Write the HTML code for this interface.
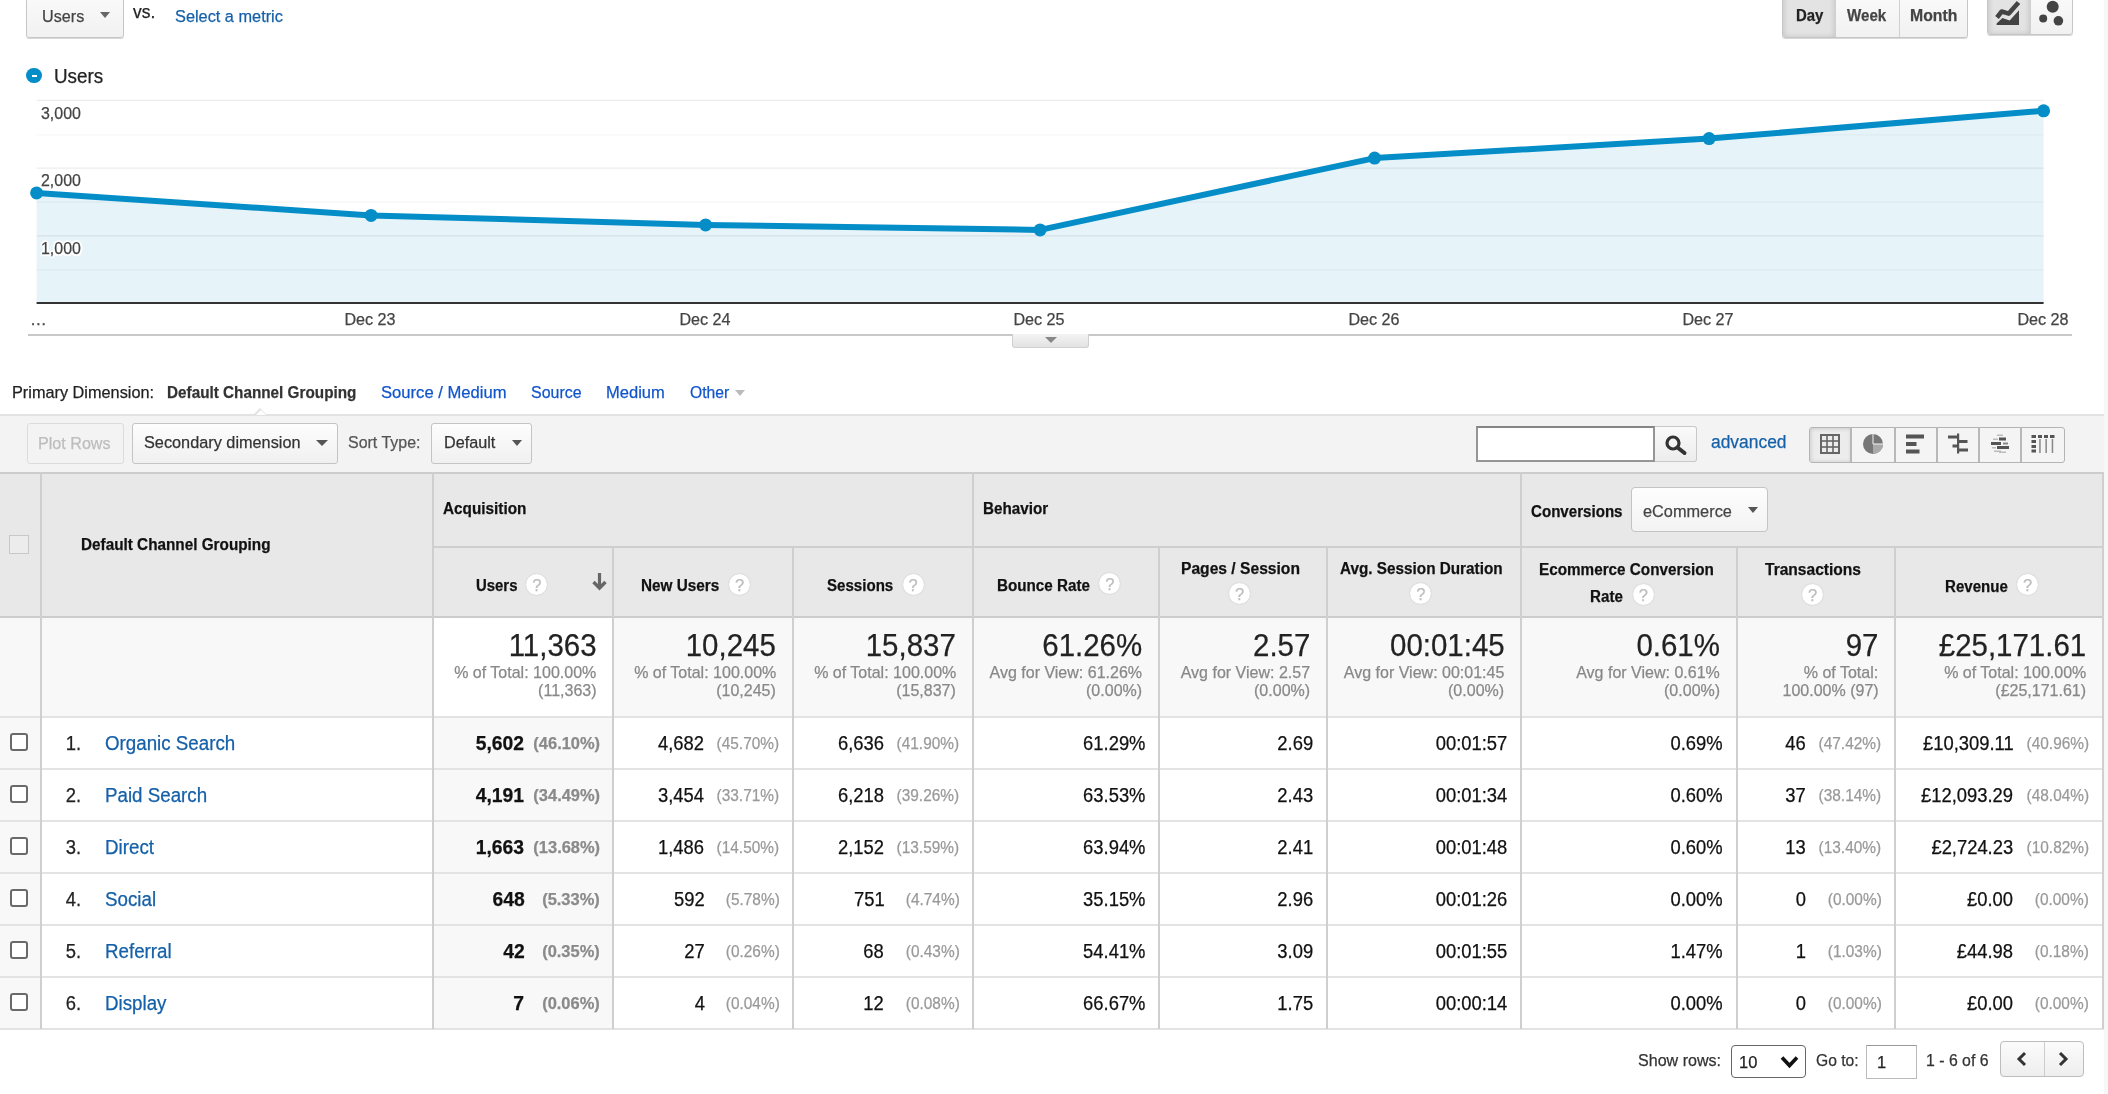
<!DOCTYPE html>
<html><head><meta charset="utf-8"><title>Channels</title><style>html,body{margin:0;padding:0;background:#fff;overflow:hidden;}#root{position:relative;width:2108px;height:1094px;overflow:hidden;background:#fff;font-family:"Liberation Sans", sans-serif;}#root div{box-sizing:content-box;}#root{will-change:transform;}#root div{-webkit-text-stroke:0.25px currentColor;}</style></head><body><div id="root">
<div style="position:absolute;left:26px;top:-10px;width:96px;height:46px;border:1.5px solid #c6c6c6;border-radius:3px;background:linear-gradient(#fbfbfb,#f1f1f1);box-shadow:0 1px 0 #d8d8d8"></div>
<div style="position:absolute;top:7.84px;font-size:17.4px;line-height:17.4px;color:#444;white-space:nowrap;left:42.4px;transform-origin:0 0;transform:scaleX(0.93);">Users</div>
<div style="position:absolute;left:100px;top:12px;width:0;height:0;border-left:5px solid transparent;border-right:5px solid transparent;border-top:6px solid #666"></div>
<div style="position:absolute;top:3.04px;font-size:18.7px;line-height:18.7px;color:#222;white-space:nowrap;left:133px;transform-origin:0 0;transform:scaleX(0.93);">vs.</div>
<div style="position:absolute;top:8.14px;font-size:17.4px;line-height:17.4px;color:#1560a8;white-space:nowrap;left:175px;transform-origin:0 0;transform:scaleX(0.938);">Select a metric</div>
<div style="position:absolute;left:1782px;top:-10px;width:184px;height:46px;border:1.5px solid #c6c6c6;border-radius:3px;background:linear-gradient(#fbfbfb,#f1f1f1);box-shadow:0 1px 0 #d8d8d8;overflow:hidden"><div style="position:absolute;left:0;top:0;width:52px;height:47px;background:#e3e3e3;box-shadow:inset 0 0 6px rgba(0,0,0,.18)"></div><div style="position:absolute;left:52px;top:0;width:1px;height:47px;background:#d0d0d0"></div><div style="position:absolute;left:116px;top:0;width:1px;height:47px;background:#d0d0d0"></div></div>
<div style="position:absolute;top:8.35px;font-size:16.8px;line-height:16.8px;color:#222;white-space:nowrap;font-weight:700;left:1795.5px;transform-origin:0 0;transform:scaleX(0.89);">Day</div>
<div style="position:absolute;top:8.35px;font-size:16.8px;line-height:16.8px;color:#444;white-space:nowrap;font-weight:700;left:1846.7px;transform-origin:0 0;transform:scaleX(0.9);">Week</div>
<div style="position:absolute;top:8.35px;font-size:16.8px;line-height:16.8px;color:#444;white-space:nowrap;font-weight:700;left:1910.4px;transform-origin:0 0;transform:scaleX(0.94);">Month</div>
<div style="position:absolute;left:1987px;top:-10px;width:84px;height:43px;border:1.5px solid #c6c6c6;border-radius:3px;background:linear-gradient(#fbfbfb,#f1f1f1);box-shadow:0 1px 0 #d8d8d8;overflow:hidden"><div style="position:absolute;left:0;top:0;width:42px;height:44px;background:#e3e3e3;box-shadow:inset 0 0 6px rgba(0,0,0,.18)"></div><div style="position:absolute;left:42px;top:0;width:1px;height:44px;background:#d0d0d0"></div></div>
<svg style="position:absolute;left:1995px;top:0px" width="40" height="35" viewBox="0 0 40 35"><path d="M1.6 25 L1.6 23.5 L7.4 17.9 L14.7 20.5 L24 10.2 L24 25 Z" fill="#444"/><path d="M2 17.5 L6.7 11.5 L13.8 13.6 L23.5 2.5" stroke="#444" stroke-width="4.6" stroke-linejoin="round" fill="none"/></svg>
<svg style="position:absolute;left:2034px;top:0px" width="32" height="30" viewBox="0 0 32 30"><circle cx="18.7" cy="6.8" r="6" fill="#444"/><circle cx="9.2" cy="18.5" r="4" fill="#444"/><circle cx="24.4" cy="20.8" r="4.8" fill="#444"/></svg>
<div style="position:absolute;left:26px;top:68px;width:16px;height:15px;border-radius:8px;background:#058dc7"></div>
<div style="position:absolute;left:31.5px;top:74.5px;width:5px;height:2.5px;background:#fff"></div>
<div style="position:absolute;top:65.69px;font-size:20.3px;line-height:20.3px;color:#222;white-space:nowrap;left:53.8px;transform-origin:0 0;transform:scaleX(0.93);">Users</div>
<svg style="position:absolute;left:0;top:0" width="2108" height="350" viewBox="0 0 2108 350"><polygon points="36.6,303 36.6,192.9 371.1,215.4 705.6,224.9 1040.1,229.9 1374.6,158.1 1709.1,138.6 2043.6,110.8 2043.6,303" fill="#058dc7" fill-opacity="0.1"/><line x1="36.6" x2="2043.6" y1="100.3" y2="100.3" stroke="#000" stroke-opacity="0.075" stroke-width="1.3"/><line x1="36.6" x2="2043.6" y1="134.8" y2="134.8" stroke="#000" stroke-opacity="0.035" stroke-width="1.3"/><line x1="36.6" x2="2043.6" y1="168.2" y2="168.2" stroke="#000" stroke-opacity="0.075" stroke-width="1.3"/><line x1="36.6" x2="2043.6" y1="202" y2="202" stroke="#000" stroke-opacity="0.035" stroke-width="1.3"/><line x1="36.6" x2="2043.6" y1="235.9" y2="235.9" stroke="#000" stroke-opacity="0.075" stroke-width="1.3"/><line x1="36.6" x2="2043.6" y1="270" y2="270" stroke="#000" stroke-opacity="0.035" stroke-width="1.3"/><line x1="36.6" x2="2043.6" y1="303" y2="303" stroke="#333" stroke-width="2"/><polyline points="36.6,192.9 371.1,215.4 705.6,224.9 1040.1,229.9 1374.6,158.1 1709.1,138.6 2043.6,110.8" fill="none" stroke="#058dc7" stroke-width="6" stroke-linejoin="round"/><circle cx="36.6" cy="192.9" r="6.5" fill="#058dc7"/><circle cx="371.1" cy="215.4" r="6.5" fill="#058dc7"/><circle cx="705.6" cy="224.9" r="6.5" fill="#058dc7"/><circle cx="1040.1" cy="229.9" r="6.5" fill="#058dc7"/><circle cx="1374.6" cy="158.1" r="6.5" fill="#058dc7"/><circle cx="1709.1" cy="138.6" r="6.5" fill="#058dc7"/><circle cx="2043.6" cy="110.8" r="6.5" fill="#058dc7"/></svg>
<div style="position:absolute;top:105.65px;font-size:16.8px;line-height:16.8px;color:#444;white-space:nowrap;left:41px;transform-origin:0 0;transform:scaleX(0.95);text-shadow:2px 0 1px #fff,-2px 0 1px #fff,0 2px 1px #fff,0 -2px 1px #fff,1.5px 1.5px 1px #fff,-1.5px -1.5px 1px #fff,1.5px -1.5px 1px #fff,-1.5px 1.5px 1px #fff,0 0 2px #fff;">3,000</div>
<div style="position:absolute;top:173.35px;font-size:16.8px;line-height:16.8px;color:#444;white-space:nowrap;left:41px;transform-origin:0 0;transform:scaleX(0.95);text-shadow:2px 0 1px #fff,-2px 0 1px #fff,0 2px 1px #fff,0 -2px 1px #fff,1.5px 1.5px 1px #fff,-1.5px -1.5px 1px #fff,1.5px -1.5px 1px #fff,-1.5px 1.5px 1px #fff,0 0 2px #fff;">2,000</div>
<div style="position:absolute;top:240.85px;font-size:16.8px;line-height:16.8px;color:#444;white-space:nowrap;left:41px;transform-origin:0 0;transform:scaleX(0.95);text-shadow:2px 0 1px #fff,-2px 0 1px #fff,0 2px 1px #fff,0 -2px 1px #fff,1.5px 1.5px 1px #fff,-1.5px -1.5px 1px #fff,1.5px -1.5px 1px #fff,-1.5px 1.5px 1px #fff,0 0 2px #fff;">1,000</div>
<div style="position:absolute;top:311.65px;font-size:16.8px;line-height:16.8px;color:#444;white-space:nowrap;left:30px;transform-origin:0 0;transform:scaleX(1);">&hellip;</div>
<div style="position:absolute;top:311.65px;font-size:16.8px;line-height:16.8px;color:#444;white-space:nowrap;left:371.1px;transform-origin:0 0;transform:translateX(-50%) scaleX(0.962);">Dec 23</div>
<div style="position:absolute;top:311.65px;font-size:16.8px;line-height:16.8px;color:#444;white-space:nowrap;left:705.6px;transform-origin:0 0;transform:translateX(-50%) scaleX(0.962);">Dec 24</div>
<div style="position:absolute;top:311.65px;font-size:16.8px;line-height:16.8px;color:#444;white-space:nowrap;left:1040.1px;transform-origin:0 0;transform:translateX(-50%) scaleX(0.962);">Dec 25</div>
<div style="position:absolute;top:311.65px;font-size:16.8px;line-height:16.8px;color:#444;white-space:nowrap;left:1374.6px;transform-origin:0 0;transform:translateX(-50%) scaleX(0.962);">Dec 26</div>
<div style="position:absolute;top:311.65px;font-size:16.8px;line-height:16.8px;color:#444;white-space:nowrap;left:1709.1px;transform-origin:0 0;transform:translateX(-50%) scaleX(0.962);">Dec 27</div>
<div style="position:absolute;top:311.65px;font-size:16.8px;line-height:16.8px;color:#444;white-space:nowrap;left:2043.6px;transform-origin:0 0;transform:translateX(-50%) scaleX(0.962);">Dec 28</div>
<div style="position:absolute;left:28px;top:334px;width:2044px;height:2px;background:#c8c8c8"></div>
<div style="position:absolute;left:1012px;top:334px;width:75px;height:13px;border:1px solid #d0d0d0;border-top:none;border-radius:0 0 3px 3px;background:linear-gradient(#f4f4f4,#e2e2e2)"></div>
<div style="position:absolute;left:1044.5px;top:337px;width:0;height:0;border-left:6px solid transparent;border-right:6px solid transparent;border-top:6px solid #888"></div>
<div style="position:absolute;top:384.14px;font-size:17.4px;line-height:17.4px;color:#222;white-space:nowrap;left:11.6px;transform-origin:0 0;transform:scaleX(0.9361);">Primary Dimension:</div>
<div style="position:absolute;top:384.14px;font-size:17.4px;line-height:17.4px;color:#333;white-space:nowrap;font-weight:700;left:166.5px;transform-origin:0 0;transform:scaleX(0.8791);">Default Channel Grouping</div>
<div style="position:absolute;top:384.14px;font-size:17.4px;line-height:17.4px;color:#1155cc;white-space:nowrap;left:380.8px;transform-origin:0 0;transform:scaleX(0.9551);">Source / Medium</div>
<div style="position:absolute;top:384.14px;font-size:17.4px;line-height:17.4px;color:#1155cc;white-space:nowrap;left:530.9px;transform-origin:0 0;transform:scaleX(0.9175);">Source</div>
<div style="position:absolute;top:384.14px;font-size:17.4px;line-height:17.4px;color:#1155cc;white-space:nowrap;left:606.4px;transform-origin:0 0;transform:scaleX(0.9499);">Medium</div>
<div style="position:absolute;top:384.14px;font-size:17.4px;line-height:17.4px;color:#1155cc;white-space:nowrap;left:690.3px;transform-origin:0 0;transform:scaleX(0.9011);">Other</div>
<div style="position:absolute;left:734.5px;top:390px;width:0;height:0;border-left:5.75px solid transparent;border-right:5.75px solid transparent;border-top:6px solid #bbb"></div>
<div style="position:absolute;left:0px;top:414px;width:2104px;height:58px;background:#f3f3f3"></div>
<div style="position:absolute;left:0px;top:414px;width:2104px;height:1.5px;background:#e2e2e2"></div>
<div style="position:absolute;left:254px;top:408px;width:0;height:0;border-left:6.5px solid transparent;border-right:6.5px solid transparent;border-bottom:6.5px solid #e2e2e2"></div>
<div style="position:absolute;left:255.5px;top:409.5px;width:0;height:0;border-left:5px solid transparent;border-right:5px solid transparent;border-bottom:5px solid #fff"></div>
<div style="position:absolute;left:26.5px;top:422.5px;width:95px;height:39px;border:1px solid #dcdcdc;border-radius:3px;background:#f3f3f3"></div>
<div style="position:absolute;top:435.34px;font-size:17.4px;line-height:17.4px;color:#bdbdbd;white-space:nowrap;left:38.4px;transform-origin:0 0;transform:scaleX(0.9266);">Plot Rows</div>
<div style="position:absolute;left:132.3px;top:422.6px;width:204px;height:39.4px;border:1.5px solid #c4c4c4;border-radius:3px;background:linear-gradient(#fdfdfd,#f0f0f0);"></div>
<div style="position:absolute;top:434.44px;font-size:17.4px;line-height:17.4px;color:#333;white-space:nowrap;left:144.3px;transform-origin:0 0;transform:scaleX(0.9358);">Secondary dimension</div>
<div style="position:absolute;left:316px;top:440px;width:0;height:0;border-left:6.0px solid transparent;border-right:6.0px solid transparent;border-top:6px solid #555"></div>
<div style="position:absolute;top:433.94px;font-size:17.4px;line-height:17.4px;color:#555;white-space:nowrap;left:347.6px;transform-origin:0 0;transform:scaleX(0.9177);">Sort Type:</div>
<div style="position:absolute;left:430.7px;top:422.8px;width:99.6px;height:38.8px;border:1.5px solid #c4c4c4;border-radius:3px;background:linear-gradient(#fdfdfd,#f0f0f0);"></div>
<div style="position:absolute;top:433.94px;font-size:17.4px;line-height:17.4px;color:#333;white-space:nowrap;left:444px;transform-origin:0 0;transform:scaleX(0.932);">Default</div>
<div style="position:absolute;left:511.7px;top:440px;width:0;height:0;border-left:5.3px solid transparent;border-right:5.3px solid transparent;border-top:6px solid #555"></div>
<div style="position:absolute;left:1476px;top:426px;width:175px;height:31.5px;border:2px solid #959595;border-top-color:#858585;background:#fff"></div>
<div style="position:absolute;left:1655px;top:426px;width:40.5px;height:33.5px;border:1px solid #c8c8c8;border-left:none;border-radius:0 3px 3px 0;background:linear-gradient(#fafafa,#ececec)"></div>
<svg style="position:absolute;left:1664px;top:434px" width="26" height="24" viewBox="0 0 26 24"><circle cx="9" cy="9" r="6" stroke="#333" stroke-width="3.2" fill="none"/><line x1="13.5" y1="13.5" x2="20.5" y2="19" stroke="#333" stroke-width="4" stroke-linecap="round"/></svg>
<div style="position:absolute;top:432.74px;font-size:18px;line-height:18px;color:#1560a8;white-space:nowrap;left:1710.7px;transform-origin:0 0;transform:scaleX(0.9673);">advanced</div>
<div style="position:absolute;left:1808.5px;top:426.5px;width:254.5px;height:34.5px;border:1.5px solid #b4b4b4;border-radius:3px;background:#f4f4f4;overflow:hidden"><div style="position:absolute;left:0;top:0;width:42px;height:35px;background:#ececec;box-shadow:inset 0 0 5px rgba(0,0,0,.2)"></div></div>
<div style="position:absolute;left:1850.35px;top:427px;width:1.5px;height:35px;background:#b8b8b8"></div>
<div style="position:absolute;left:1894.25px;top:427px;width:1.5px;height:35px;background:#b8b8b8"></div>
<div style="position:absolute;left:1936.15px;top:427px;width:1.5px;height:35px;background:#b8b8b8"></div>
<div style="position:absolute;left:1978.25px;top:427px;width:1.5px;height:35px;background:#b8b8b8"></div>
<div style="position:absolute;left:2020.25px;top:427px;width:1.5px;height:35px;background:#b8b8b8"></div>
<svg style="position:absolute;left:1820px;top:434px" width="20" height="20" viewBox="0 0 20 20"><rect x="1" y="1" width="18" height="18" fill="none" stroke="#666" stroke-width="2"/><line x1="7" y1="1" x2="7" y2="19" stroke="#666" stroke-width="1.6"/><line x1="13" y1="1" x2="13" y2="19" stroke="#666" stroke-width="1.6"/><line x1="1" y1="7" x2="19" y2="7" stroke="#666" stroke-width="1.6"/><line x1="1" y1="13" x2="19" y2="13" stroke="#666" stroke-width="1.6"/></svg>
<svg style="position:absolute;left:1862px;top:433px" width="22" height="22" viewBox="0 0 22 22"><circle cx="11" cy="11" r="10" fill="#777"/><path d="M11 11 L21 11 A10 10 0 0 1 11 21 Z" fill="#aaa"/><path d="M11 1 L11 11 L21 11" stroke="#f4f4f4" stroke-width="1" fill="none"/></svg>
<svg style="position:absolute;left:1906px;top:434px" width="20" height="20" viewBox="0 0 20 20"><rect x="0" y="0.5" width="18" height="4" fill="#555"/><rect x="0" y="8" width="10.5" height="4" fill="#555"/><rect x="0" y="15.5" width="13.5" height="4" fill="#555"/></svg>
<svg style="position:absolute;left:1947px;top:433px" width="24" height="22" viewBox="0 0 24 22"><rect x="10" y="0.5" width="2.2" height="20" fill="#555"/><rect x="1" y="2.5" width="10" height="3" fill="#555"/><rect x="11" y="7" width="9.5" height="3" fill="#555"/><rect x="5.5" y="11.5" width="5.5" height="3" fill="#555"/><rect x="11" y="15.5" width="10" height="3" fill="#555"/></svg>
<svg style="position:absolute;left:1990px;top:434px" width="22" height="20" viewBox="0 0 22 20"><rect x="7" y="0.5" width="6" height="1.5" fill="#bbb"/><rect x="9" y="3.5" width="7" height="3" fill="#555"/><rect x="3" y="4.5" width="5" height="1.5" fill="#bbb"/><rect x="1" y="8" width="10" height="3" fill="#555"/><rect x="13" y="8.5" width="5" height="2" fill="#888"/><rect x="7" y="12" width="12" height="3" fill="#555"/><rect x="2" y="13" width="4" height="1.5" fill="#bbb"/><rect x="4" y="16.5" width="7" height="1.5" fill="#bbb"/><rect x="9" y="17.5" width="7" height="1.5" fill="#bbb"/></svg>
<svg style="position:absolute;left:2031px;top:434px" width="24" height="20" viewBox="0 0 24 20"><rect x="0.5" y="1" width="4.5" height="3" fill="#555"/><rect x="7" y="1" width="4" height="3" fill="#555"/><rect x="13" y="1" width="4" height="3" fill="#555"/><rect x="19" y="1" width="4.5" height="3" fill="#555"/><rect x="0.5" y="6" width="4.5" height="3" fill="#555"/><rect x="0.5" y="11" width="4.5" height="3" fill="#555"/><rect x="0.5" y="15.5" width="4.5" height="3" fill="#555"/><rect x="8.2" y="5" width="1.5" height="14" fill="#888"/><rect x="14.4" y="5" width="1.5" height="14" fill="#888"/><rect x="20.7" y="5" width="1.5" height="14" fill="#888"/></svg>
<div style="position:absolute;left:0px;top:471.5px;width:2104px;height:145.5px;background:#e8e8e8"></div>
<div style="position:absolute;left:0px;top:617px;width:2104px;height:100px;background:#f8f8f8"></div>
<div style="position:absolute;left:433px;top:617px;width:180px;height:100px;background:#fff"></div>
<div style="position:absolute;left:0px;top:717px;width:2104px;height:312px;background:#fff"></div>
<div style="position:absolute;left:0px;top:717px;width:41px;height:312px;background:#f8f8f8"></div>
<div style="position:absolute;left:433px;top:717px;width:180px;height:312px;background:#f8f8f8"></div>
<div style="position:absolute;left:2104px;top:0px;width:4px;height:1094px;background:#f6f7f9"></div>
<div style="position:absolute;left:0px;top:471.5px;width:2104px;height:2px;background:#cccccc"></div>
<div style="position:absolute;left:433px;top:546px;width:1671px;height:1.6px;background:#cfcfcf"></div>
<div style="position:absolute;left:0px;top:616px;width:2104px;height:1.8px;background:#cccccc"></div>
<div style="position:absolute;left:0px;top:716px;width:2104px;height:1.6px;background:#e3e3e3"></div>
<div style="position:absolute;left:0px;top:768px;width:2104px;height:1.6px;background:#e3e3e3"></div>
<div style="position:absolute;left:0px;top:820px;width:2104px;height:1.6px;background:#e3e3e3"></div>
<div style="position:absolute;left:0px;top:872px;width:2104px;height:1.6px;background:#e3e3e3"></div>
<div style="position:absolute;left:0px;top:924px;width:2104px;height:1.6px;background:#e3e3e3"></div>
<div style="position:absolute;left:0px;top:976px;width:2104px;height:1.6px;background:#e3e3e3"></div>
<div style="position:absolute;left:0px;top:1028px;width:2104px;height:1.6px;background:#e3e3e3"></div>
<div style="position:absolute;left:40px;top:471.5px;width:1.7px;height:557.5px;background:#cfcfcf"></div>
<div style="position:absolute;left:432px;top:471.5px;width:1.7px;height:557.5px;background:#cfcfcf"></div>
<div style="position:absolute;left:612px;top:547px;width:1.7px;height:482px;background:#cfcfcf"></div>
<div style="position:absolute;left:792px;top:547px;width:1.7px;height:482px;background:#cfcfcf"></div>
<div style="position:absolute;left:972px;top:471.5px;width:1.7px;height:557.5px;background:#cfcfcf"></div>
<div style="position:absolute;left:1158px;top:547px;width:1.7px;height:482px;background:#cfcfcf"></div>
<div style="position:absolute;left:1326px;top:547px;width:1.7px;height:482px;background:#cfcfcf"></div>
<div style="position:absolute;left:1520px;top:471.5px;width:1.7px;height:557.5px;background:#cfcfcf"></div>
<div style="position:absolute;left:1736px;top:547px;width:1.7px;height:482px;background:#cfcfcf"></div>
<div style="position:absolute;left:1894px;top:547px;width:1.7px;height:482px;background:#cfcfcf"></div>
<div style="position:absolute;left:2102px;top:471.5px;width:1.7px;height:557.5px;background:#cfcfcf"></div>
<div style="position:absolute;left:8.5px;top:534.5px;width:18px;height:17px;border:1.5px solid #c8c8c8;background:#ececec"></div>
<div style="position:absolute;top:536.21px;font-size:17.2px;line-height:17.2px;color:#111;white-space:nowrap;font-weight:700;left:81.4px;transform-origin:0 0;transform:scaleX(0.8902);">Default Channel Grouping</div>
<div style="position:absolute;top:500.41px;font-size:17.2px;line-height:17.2px;color:#111;white-space:nowrap;font-weight:700;left:443.3px;transform-origin:0 0;transform:scaleX(0.8905);">Acquisition</div>
<div style="position:absolute;top:500.41px;font-size:17.2px;line-height:17.2px;color:#111;white-space:nowrap;font-weight:700;left:983.3px;transform-origin:0 0;transform:scaleX(0.8859);">Behavior</div>
<div style="position:absolute;top:502.71px;font-size:17.2px;line-height:17.2px;color:#111;white-space:nowrap;font-weight:700;left:1531.2px;transform-origin:0 0;transform:scaleX(0.8791);">Conversions</div>
<div style="position:absolute;left:1631px;top:487px;width:134.5px;height:43px;border:1.5px solid #c4c4c4;border-radius:4px;background:linear-gradient(#fdfdfd,#f3f3f3)"></div>
<div style="position:absolute;top:503.04px;font-size:17.4px;line-height:17.4px;color:#444;white-space:nowrap;left:1643.4px;transform-origin:0 0;transform:scaleX(0.9383);">eCommerce</div>
<div style="position:absolute;left:1747.5px;top:507px;width:0;height:0;border-left:5.5px solid transparent;border-right:5.5px solid transparent;border-top:6px solid #555"></div>
<div style="position:absolute;top:577.01px;font-size:17.2px;line-height:17.2px;color:#111;white-space:nowrap;font-weight:700;left:475.5px;transform-origin:0 0;transform:scaleX(0.8682);">Users</div>
<div style="position:absolute;left:526.4px;top:573.8px;width:21px;height:21px;border-radius:50%;background:#fff;box-shadow:0 0 1.5px #bbb;color:#bdbdbd;font-family:'Liberation Sans',sans-serif;font-size:16.5px;line-height:22px;text-align:center">?</div>
<svg style="position:absolute;left:591px;top:572.3px" width="17" height="19" viewBox="0 0 17 19"><path d="M8.5 1 L8.5 15" stroke="#666" stroke-width="3.2"/><path d="M2.5 10 L8.5 16 L14.5 10" stroke="#666" stroke-width="3.4" fill="none"/></svg>
<div style="position:absolute;top:577.01px;font-size:17.2px;line-height:17.2px;color:#111;white-space:nowrap;font-weight:700;left:641px;transform-origin:0 0;transform:scaleX(0.8903);">New Users</div>
<div style="position:absolute;left:729.2px;top:573.8px;width:21px;height:21px;border-radius:50%;background:#fff;box-shadow:0 0 1.5px #bbb;color:#bdbdbd;font-family:'Liberation Sans',sans-serif;font-size:16.5px;line-height:22px;text-align:center">?</div>
<div style="position:absolute;top:577.01px;font-size:17.2px;line-height:17.2px;color:#111;white-space:nowrap;font-weight:700;left:827.1px;transform-origin:0 0;transform:scaleX(0.8776);">Sessions</div>
<div style="position:absolute;left:902.6px;top:573.8px;width:21px;height:21px;border-radius:50%;background:#fff;box-shadow:0 0 1.5px #bbb;color:#bdbdbd;font-family:'Liberation Sans',sans-serif;font-size:16.5px;line-height:22px;text-align:center">?</div>
<div style="position:absolute;top:577.01px;font-size:17.2px;line-height:17.2px;color:#111;white-space:nowrap;font-weight:700;left:997px;transform-origin:0 0;transform:scaleX(0.8845);">Bounce Rate</div>
<div style="position:absolute;left:1099.3px;top:573.1px;width:21px;height:21px;border-radius:50%;background:#fff;box-shadow:0 0 1.5px #bbb;color:#bdbdbd;font-family:'Liberation Sans',sans-serif;font-size:16.5px;line-height:22px;text-align:center">?</div>
<div style="position:absolute;top:560.01px;font-size:17.2px;line-height:17.2px;color:#111;white-space:nowrap;font-weight:700;left:1180.6px;transform-origin:0 0;transform:scaleX(0.9087);">Pages / Session</div>
<div style="position:absolute;left:1229.1px;top:583.2px;width:21px;height:21px;border-radius:50%;background:#fff;box-shadow:0 0 1.5px #bbb;color:#bdbdbd;font-family:'Liberation Sans',sans-serif;font-size:16.5px;line-height:22px;text-align:center">?</div>
<div style="position:absolute;top:560.01px;font-size:17.2px;line-height:17.2px;color:#111;white-space:nowrap;font-weight:700;left:1339.7px;transform-origin:0 0;transform:scaleX(0.8898);">Avg. Session Duration</div>
<div style="position:absolute;left:1410.3px;top:583.2px;width:21px;height:21px;border-radius:50%;background:#fff;box-shadow:0 0 1.5px #bbb;color:#bdbdbd;font-family:'Liberation Sans',sans-serif;font-size:16.5px;line-height:22px;text-align:center">?</div>
<div style="position:absolute;top:561.21px;font-size:17.2px;line-height:17.2px;color:#111;white-space:nowrap;font-weight:700;left:1538.7px;transform-origin:0 0;transform:scaleX(0.8883);">Ecommerce Conversion</div>
<div style="position:absolute;top:587.61px;font-size:17.2px;line-height:17.2px;color:#111;white-space:nowrap;font-weight:700;left:1589.9px;transform-origin:0 0;transform:scaleX(0.882);">Rate</div>
<div style="position:absolute;left:1632.9px;top:583.6px;width:21px;height:21px;border-radius:50%;background:#fff;box-shadow:0 0 1.5px #bbb;color:#bdbdbd;font-family:'Liberation Sans',sans-serif;font-size:16.5px;line-height:22px;text-align:center">?</div>
<div style="position:absolute;top:561.21px;font-size:17.2px;line-height:17.2px;color:#111;white-space:nowrap;font-weight:700;left:1764.9px;transform-origin:0 0;transform:scaleX(0.9057);">Transactions</div>
<div style="position:absolute;left:1802.2px;top:583.5px;width:21px;height:21px;border-radius:50%;background:#fff;box-shadow:0 0 1.5px #bbb;color:#bdbdbd;font-family:'Liberation Sans',sans-serif;font-size:16.5px;line-height:22px;text-align:center">?</div>
<div style="position:absolute;top:577.51px;font-size:17.2px;line-height:17.2px;color:#111;white-space:nowrap;font-weight:700;left:1945px;transform-origin:0 0;transform:scaleX(0.8773);">Revenue</div>
<div style="position:absolute;left:2017.2px;top:573.5px;width:21px;height:21px;border-radius:50%;background:#fff;box-shadow:0 0 1.5px #bbb;color:#bdbdbd;font-family:'Liberation Sans',sans-serif;font-size:16.5px;line-height:22px;text-align:center">?</div>
<div style="position:absolute;top:630.31px;font-size:31.0px;line-height:31.0px;color:#222;white-space:nowrap;right:1511.8px;transform-origin:100% 0;transform:scaleX(0.95);">11,363</div>
<div style="position:absolute;top:664.52px;font-size:16.6px;line-height:16.6px;color:#888;white-space:nowrap;right:1511.8px;transform-origin:100% 0;transform:scaleX(0.965);">% of Total: 100.00%</div>
<div style="position:absolute;top:682.82px;font-size:16.6px;line-height:16.6px;color:#888;white-space:nowrap;right:1511.8px;transform-origin:100% 0;transform:scaleX(0.965);">(11,363)</div>
<div style="position:absolute;top:630.31px;font-size:31.0px;line-height:31.0px;color:#222;white-space:nowrap;right:1331.8px;transform-origin:100% 0;transform:scaleX(0.95);">10,245</div>
<div style="position:absolute;top:664.52px;font-size:16.6px;line-height:16.6px;color:#888;white-space:nowrap;right:1331.8px;transform-origin:100% 0;transform:scaleX(0.965);">% of Total: 100.00%</div>
<div style="position:absolute;top:682.82px;font-size:16.6px;line-height:16.6px;color:#888;white-space:nowrap;right:1331.8px;transform-origin:100% 0;transform:scaleX(0.965);">(10,245)</div>
<div style="position:absolute;top:630.31px;font-size:31.0px;line-height:31.0px;color:#222;white-space:nowrap;right:1151.8px;transform-origin:100% 0;transform:scaleX(0.95);">15,837</div>
<div style="position:absolute;top:664.52px;font-size:16.6px;line-height:16.6px;color:#888;white-space:nowrap;right:1151.8px;transform-origin:100% 0;transform:scaleX(0.965);">% of Total: 100.00%</div>
<div style="position:absolute;top:682.82px;font-size:16.6px;line-height:16.6px;color:#888;white-space:nowrap;right:1151.8px;transform-origin:100% 0;transform:scaleX(0.965);">(15,837)</div>
<div style="position:absolute;top:630.31px;font-size:31.0px;line-height:31.0px;color:#222;white-space:nowrap;right:965.8px;transform-origin:100% 0;transform:scaleX(0.95);">61.26%</div>
<div style="position:absolute;top:664.52px;font-size:16.6px;line-height:16.6px;color:#888;white-space:nowrap;right:965.8px;transform-origin:100% 0;transform:scaleX(0.965);">Avg for View: 61.26%</div>
<div style="position:absolute;top:682.82px;font-size:16.6px;line-height:16.6px;color:#888;white-space:nowrap;right:965.8px;transform-origin:100% 0;transform:scaleX(0.965);">(0.00%)</div>
<div style="position:absolute;top:630.31px;font-size:31.0px;line-height:31.0px;color:#222;white-space:nowrap;right:797.8px;transform-origin:100% 0;transform:scaleX(0.95);">2.57</div>
<div style="position:absolute;top:664.52px;font-size:16.6px;line-height:16.6px;color:#888;white-space:nowrap;right:797.8px;transform-origin:100% 0;transform:scaleX(0.965);">Avg for View: 2.57</div>
<div style="position:absolute;top:682.82px;font-size:16.6px;line-height:16.6px;color:#888;white-space:nowrap;right:797.8px;transform-origin:100% 0;transform:scaleX(0.965);">(0.00%)</div>
<div style="position:absolute;top:630.31px;font-size:31.0px;line-height:31.0px;color:#222;white-space:nowrap;right:603.8px;transform-origin:100% 0;transform:scaleX(0.95);">00:01:45</div>
<div style="position:absolute;top:664.52px;font-size:16.6px;line-height:16.6px;color:#888;white-space:nowrap;right:603.8px;transform-origin:100% 0;transform:scaleX(0.965);">Avg for View: 00:01:45</div>
<div style="position:absolute;top:682.82px;font-size:16.6px;line-height:16.6px;color:#888;white-space:nowrap;right:603.8px;transform-origin:100% 0;transform:scaleX(0.965);">(0.00%)</div>
<div style="position:absolute;top:630.31px;font-size:31.0px;line-height:31.0px;color:#222;white-space:nowrap;right:387.79999999999995px;transform-origin:100% 0;transform:scaleX(0.95);">0.61%</div>
<div style="position:absolute;top:664.52px;font-size:16.6px;line-height:16.6px;color:#888;white-space:nowrap;right:387.79999999999995px;transform-origin:100% 0;transform:scaleX(0.965);">Avg for View: 0.61%</div>
<div style="position:absolute;top:682.82px;font-size:16.6px;line-height:16.6px;color:#888;white-space:nowrap;right:387.79999999999995px;transform-origin:100% 0;transform:scaleX(0.965);">(0.00%)</div>
<div style="position:absolute;top:630.31px;font-size:31.0px;line-height:31.0px;color:#222;white-space:nowrap;right:229.79999999999995px;transform-origin:100% 0;transform:scaleX(0.95);">97</div>
<div style="position:absolute;top:664.52px;font-size:16.6px;line-height:16.6px;color:#888;white-space:nowrap;right:229.79999999999995px;transform-origin:100% 0;transform:scaleX(0.965);">% of Total:</div>
<div style="position:absolute;top:682.82px;font-size:16.6px;line-height:16.6px;color:#888;white-space:nowrap;right:229.79999999999995px;transform-origin:100% 0;transform:scaleX(0.965);">100.00% (97)</div>
<div style="position:absolute;top:630.31px;font-size:31.0px;line-height:31.0px;color:#222;white-space:nowrap;right:21.800000000000182px;transform-origin:100% 0;transform:scaleX(0.95);">&pound;25,171.61</div>
<div style="position:absolute;top:664.52px;font-size:16.6px;line-height:16.6px;color:#888;white-space:nowrap;right:21.800000000000182px;transform-origin:100% 0;transform:scaleX(0.965);">% of Total: 100.00%</div>
<div style="position:absolute;top:682.82px;font-size:16.6px;line-height:16.6px;color:#888;white-space:nowrap;right:21.800000000000182px;transform-origin:100% 0;transform:scaleX(0.965);">(&pound;25,171.61)</div>
<div style="position:absolute;left:10px;top:732.5px;width:14px;height:14px;border:2px solid #6a6a6a;border-radius:3px;background:#fff"></div>
<div style="position:absolute;top:734.15px;font-size:19.4px;line-height:19.4px;color:#222;white-space:nowrap;right:2027.3px;transform-origin:100% 0;transform:scaleX(0.95);">1.</div>
<div style="position:absolute;top:734.15px;font-size:19.4px;line-height:19.4px;color:#1560a8;white-space:nowrap;left:105px;transform-origin:0 0;transform:scaleX(0.967);">Organic Search</div>
<div style="position:absolute;top:733.98px;font-size:19.6px;line-height:19.6px;color:#111;white-space:nowrap;font-weight:700;right:1583.7px;transform-origin:100% 0;transform:scaleX(0.985);">5,602</div>
<div style="position:absolute;top:736.35px;font-size:16.8px;line-height:16.8px;color:#8a8a8a;white-space:nowrap;font-weight:700;right:1508.4px;transform-origin:100% 0;transform:scaleX(0.98);">(46.10%)</div>
<div style="position:absolute;top:733.98px;font-size:19.6px;line-height:19.6px;color:#111;white-space:nowrap;right:1403.6px;transform-origin:100% 0;transform:scaleX(0.938);">4,682</div>
<div style="position:absolute;top:736.35px;font-size:16.8px;line-height:16.8px;color:#999;white-space:nowrap;right:1328.7px;transform-origin:100% 0;transform:scaleX(0.918);">(45.70%)</div>
<div style="position:absolute;top:733.98px;font-size:19.6px;line-height:19.6px;color:#111;white-space:nowrap;right:1223.8px;transform-origin:100% 0;transform:scaleX(0.938);">6,636</div>
<div style="position:absolute;top:736.35px;font-size:16.8px;line-height:16.8px;color:#999;white-space:nowrap;right:1148.6px;transform-origin:100% 0;transform:scaleX(0.918);">(41.90%)</div>
<div style="position:absolute;top:733.98px;font-size:19.6px;line-height:19.6px;color:#111;white-space:nowrap;right:962.9000000000001px;transform-origin:100% 0;transform:scaleX(0.938);">61.29%</div>
<div style="position:absolute;top:733.98px;font-size:19.6px;line-height:19.6px;color:#111;white-space:nowrap;right:795px;transform-origin:100% 0;transform:scaleX(0.938);">2.69</div>
<div style="position:absolute;top:733.98px;font-size:19.6px;line-height:19.6px;color:#111;white-space:nowrap;right:600.8px;transform-origin:100% 0;transform:scaleX(0.938);">00:01:57</div>
<div style="position:absolute;top:733.98px;font-size:19.6px;line-height:19.6px;color:#111;white-space:nowrap;right:385px;transform-origin:100% 0;transform:scaleX(0.938);">0.69%</div>
<div style="position:absolute;top:733.98px;font-size:19.6px;line-height:19.6px;color:#111;white-space:nowrap;right:302.29999999999995px;transform-origin:100% 0;transform:scaleX(0.938);">46</div>
<div style="position:absolute;top:736.35px;font-size:16.8px;line-height:16.8px;color:#999;white-space:nowrap;right:226.70000000000005px;transform-origin:100% 0;transform:scaleX(0.918);">(47.42%)</div>
<div style="position:absolute;top:733.98px;font-size:19.6px;line-height:19.6px;color:#111;white-space:nowrap;right:94.59999999999991px;transform-origin:100% 0;transform:scaleX(0.938);">&pound;10,309.11</div>
<div style="position:absolute;top:736.35px;font-size:16.8px;line-height:16.8px;color:#999;white-space:nowrap;right:19px;transform-origin:100% 0;transform:scaleX(0.918);">(40.96%)</div>
<div style="position:absolute;left:10px;top:784.5px;width:14px;height:14px;border:2px solid #6a6a6a;border-radius:3px;background:#fff"></div>
<div style="position:absolute;top:786.15px;font-size:19.4px;line-height:19.4px;color:#222;white-space:nowrap;right:2027.3px;transform-origin:100% 0;transform:scaleX(0.95);">2.</div>
<div style="position:absolute;top:786.15px;font-size:19.4px;line-height:19.4px;color:#1560a8;white-space:nowrap;left:105px;transform-origin:0 0;transform:scaleX(0.967);">Paid Search</div>
<div style="position:absolute;top:785.98px;font-size:19.6px;line-height:19.6px;color:#111;white-space:nowrap;font-weight:700;right:1583.7px;transform-origin:100% 0;transform:scaleX(0.985);">4,191</div>
<div style="position:absolute;top:788.35px;font-size:16.8px;line-height:16.8px;color:#8a8a8a;white-space:nowrap;font-weight:700;right:1508.4px;transform-origin:100% 0;transform:scaleX(0.98);">(34.49%)</div>
<div style="position:absolute;top:785.98px;font-size:19.6px;line-height:19.6px;color:#111;white-space:nowrap;right:1403.6px;transform-origin:100% 0;transform:scaleX(0.938);">3,454</div>
<div style="position:absolute;top:788.35px;font-size:16.8px;line-height:16.8px;color:#999;white-space:nowrap;right:1328.7px;transform-origin:100% 0;transform:scaleX(0.918);">(33.71%)</div>
<div style="position:absolute;top:785.98px;font-size:19.6px;line-height:19.6px;color:#111;white-space:nowrap;right:1223.8px;transform-origin:100% 0;transform:scaleX(0.938);">6,218</div>
<div style="position:absolute;top:788.35px;font-size:16.8px;line-height:16.8px;color:#999;white-space:nowrap;right:1148.6px;transform-origin:100% 0;transform:scaleX(0.918);">(39.26%)</div>
<div style="position:absolute;top:785.98px;font-size:19.6px;line-height:19.6px;color:#111;white-space:nowrap;right:962.9000000000001px;transform-origin:100% 0;transform:scaleX(0.938);">63.53%</div>
<div style="position:absolute;top:785.98px;font-size:19.6px;line-height:19.6px;color:#111;white-space:nowrap;right:795px;transform-origin:100% 0;transform:scaleX(0.938);">2.43</div>
<div style="position:absolute;top:785.98px;font-size:19.6px;line-height:19.6px;color:#111;white-space:nowrap;right:600.8px;transform-origin:100% 0;transform:scaleX(0.938);">00:01:34</div>
<div style="position:absolute;top:785.98px;font-size:19.6px;line-height:19.6px;color:#111;white-space:nowrap;right:385px;transform-origin:100% 0;transform:scaleX(0.938);">0.60%</div>
<div style="position:absolute;top:785.98px;font-size:19.6px;line-height:19.6px;color:#111;white-space:nowrap;right:302.29999999999995px;transform-origin:100% 0;transform:scaleX(0.938);">37</div>
<div style="position:absolute;top:788.35px;font-size:16.8px;line-height:16.8px;color:#999;white-space:nowrap;right:226.70000000000005px;transform-origin:100% 0;transform:scaleX(0.918);">(38.14%)</div>
<div style="position:absolute;top:785.98px;font-size:19.6px;line-height:19.6px;color:#111;white-space:nowrap;right:94.59999999999991px;transform-origin:100% 0;transform:scaleX(0.938);">&pound;12,093.29</div>
<div style="position:absolute;top:788.35px;font-size:16.8px;line-height:16.8px;color:#999;white-space:nowrap;right:19px;transform-origin:100% 0;transform:scaleX(0.918);">(48.04%)</div>
<div style="position:absolute;left:10px;top:836.5px;width:14px;height:14px;border:2px solid #6a6a6a;border-radius:3px;background:#fff"></div>
<div style="position:absolute;top:838.15px;font-size:19.4px;line-height:19.4px;color:#222;white-space:nowrap;right:2027.3px;transform-origin:100% 0;transform:scaleX(0.95);">3.</div>
<div style="position:absolute;top:838.15px;font-size:19.4px;line-height:19.4px;color:#1560a8;white-space:nowrap;left:105px;transform-origin:0 0;transform:scaleX(0.967);">Direct</div>
<div style="position:absolute;top:837.98px;font-size:19.6px;line-height:19.6px;color:#111;white-space:nowrap;font-weight:700;right:1583.7px;transform-origin:100% 0;transform:scaleX(0.985);">1,663</div>
<div style="position:absolute;top:840.35px;font-size:16.8px;line-height:16.8px;color:#8a8a8a;white-space:nowrap;font-weight:700;right:1508.4px;transform-origin:100% 0;transform:scaleX(0.98);">(13.68%)</div>
<div style="position:absolute;top:837.98px;font-size:19.6px;line-height:19.6px;color:#111;white-space:nowrap;right:1403.6px;transform-origin:100% 0;transform:scaleX(0.938);">1,486</div>
<div style="position:absolute;top:840.35px;font-size:16.8px;line-height:16.8px;color:#999;white-space:nowrap;right:1328.7px;transform-origin:100% 0;transform:scaleX(0.918);">(14.50%)</div>
<div style="position:absolute;top:837.98px;font-size:19.6px;line-height:19.6px;color:#111;white-space:nowrap;right:1223.8px;transform-origin:100% 0;transform:scaleX(0.938);">2,152</div>
<div style="position:absolute;top:840.35px;font-size:16.8px;line-height:16.8px;color:#999;white-space:nowrap;right:1148.6px;transform-origin:100% 0;transform:scaleX(0.918);">(13.59%)</div>
<div style="position:absolute;top:837.98px;font-size:19.6px;line-height:19.6px;color:#111;white-space:nowrap;right:962.9000000000001px;transform-origin:100% 0;transform:scaleX(0.938);">63.94%</div>
<div style="position:absolute;top:837.98px;font-size:19.6px;line-height:19.6px;color:#111;white-space:nowrap;right:795px;transform-origin:100% 0;transform:scaleX(0.938);">2.41</div>
<div style="position:absolute;top:837.98px;font-size:19.6px;line-height:19.6px;color:#111;white-space:nowrap;right:600.8px;transform-origin:100% 0;transform:scaleX(0.938);">00:01:48</div>
<div style="position:absolute;top:837.98px;font-size:19.6px;line-height:19.6px;color:#111;white-space:nowrap;right:385px;transform-origin:100% 0;transform:scaleX(0.938);">0.60%</div>
<div style="position:absolute;top:837.98px;font-size:19.6px;line-height:19.6px;color:#111;white-space:nowrap;right:302.29999999999995px;transform-origin:100% 0;transform:scaleX(0.938);">13</div>
<div style="position:absolute;top:840.35px;font-size:16.8px;line-height:16.8px;color:#999;white-space:nowrap;right:226.70000000000005px;transform-origin:100% 0;transform:scaleX(0.918);">(13.40%)</div>
<div style="position:absolute;top:837.98px;font-size:19.6px;line-height:19.6px;color:#111;white-space:nowrap;right:94.59999999999991px;transform-origin:100% 0;transform:scaleX(0.938);">&pound;2,724.23</div>
<div style="position:absolute;top:840.35px;font-size:16.8px;line-height:16.8px;color:#999;white-space:nowrap;right:19px;transform-origin:100% 0;transform:scaleX(0.918);">(10.82%)</div>
<div style="position:absolute;left:10px;top:888.5px;width:14px;height:14px;border:2px solid #6a6a6a;border-radius:3px;background:#fff"></div>
<div style="position:absolute;top:890.15px;font-size:19.4px;line-height:19.4px;color:#222;white-space:nowrap;right:2027.3px;transform-origin:100% 0;transform:scaleX(0.95);">4.</div>
<div style="position:absolute;top:890.15px;font-size:19.4px;line-height:19.4px;color:#1560a8;white-space:nowrap;left:105px;transform-origin:0 0;transform:scaleX(0.967);">Social</div>
<div style="position:absolute;top:889.98px;font-size:19.6px;line-height:19.6px;color:#111;white-space:nowrap;font-weight:700;right:1583.7px;transform-origin:100% 0;transform:scaleX(0.985);">648</div>
<div style="position:absolute;top:892.35px;font-size:16.8px;line-height:16.8px;color:#8a8a8a;white-space:nowrap;font-weight:700;right:1508.4px;transform-origin:100% 0;transform:scaleX(0.98);">(5.33%)</div>
<div style="position:absolute;top:889.98px;font-size:19.6px;line-height:19.6px;color:#111;white-space:nowrap;right:1403.6px;transform-origin:100% 0;transform:scaleX(0.938);">592</div>
<div style="position:absolute;top:892.35px;font-size:16.8px;line-height:16.8px;color:#999;white-space:nowrap;right:1328.7px;transform-origin:100% 0;transform:scaleX(0.918);">(5.78%)</div>
<div style="position:absolute;top:889.98px;font-size:19.6px;line-height:19.6px;color:#111;white-space:nowrap;right:1223.8px;transform-origin:100% 0;transform:scaleX(0.938);">751</div>
<div style="position:absolute;top:892.35px;font-size:16.8px;line-height:16.8px;color:#999;white-space:nowrap;right:1148.6px;transform-origin:100% 0;transform:scaleX(0.918);">(4.74%)</div>
<div style="position:absolute;top:889.98px;font-size:19.6px;line-height:19.6px;color:#111;white-space:nowrap;right:962.9000000000001px;transform-origin:100% 0;transform:scaleX(0.938);">35.15%</div>
<div style="position:absolute;top:889.98px;font-size:19.6px;line-height:19.6px;color:#111;white-space:nowrap;right:795px;transform-origin:100% 0;transform:scaleX(0.938);">2.96</div>
<div style="position:absolute;top:889.98px;font-size:19.6px;line-height:19.6px;color:#111;white-space:nowrap;right:600.8px;transform-origin:100% 0;transform:scaleX(0.938);">00:01:26</div>
<div style="position:absolute;top:889.98px;font-size:19.6px;line-height:19.6px;color:#111;white-space:nowrap;right:385px;transform-origin:100% 0;transform:scaleX(0.938);">0.00%</div>
<div style="position:absolute;top:889.98px;font-size:19.6px;line-height:19.6px;color:#111;white-space:nowrap;right:302.29999999999995px;transform-origin:100% 0;transform:scaleX(0.938);">0</div>
<div style="position:absolute;top:892.35px;font-size:16.8px;line-height:16.8px;color:#999;white-space:nowrap;right:226.70000000000005px;transform-origin:100% 0;transform:scaleX(0.918);">(0.00%)</div>
<div style="position:absolute;top:889.98px;font-size:19.6px;line-height:19.6px;color:#111;white-space:nowrap;right:94.59999999999991px;transform-origin:100% 0;transform:scaleX(0.938);">&pound;0.00</div>
<div style="position:absolute;top:892.35px;font-size:16.8px;line-height:16.8px;color:#999;white-space:nowrap;right:19px;transform-origin:100% 0;transform:scaleX(0.918);">(0.00%)</div>
<div style="position:absolute;left:10px;top:940.5px;width:14px;height:14px;border:2px solid #6a6a6a;border-radius:3px;background:#fff"></div>
<div style="position:absolute;top:942.15px;font-size:19.4px;line-height:19.4px;color:#222;white-space:nowrap;right:2027.3px;transform-origin:100% 0;transform:scaleX(0.95);">5.</div>
<div style="position:absolute;top:942.15px;font-size:19.4px;line-height:19.4px;color:#1560a8;white-space:nowrap;left:105px;transform-origin:0 0;transform:scaleX(0.967);">Referral</div>
<div style="position:absolute;top:941.98px;font-size:19.6px;line-height:19.6px;color:#111;white-space:nowrap;font-weight:700;right:1583.7px;transform-origin:100% 0;transform:scaleX(0.985);">42</div>
<div style="position:absolute;top:944.35px;font-size:16.8px;line-height:16.8px;color:#8a8a8a;white-space:nowrap;font-weight:700;right:1508.4px;transform-origin:100% 0;transform:scaleX(0.98);">(0.35%)</div>
<div style="position:absolute;top:941.98px;font-size:19.6px;line-height:19.6px;color:#111;white-space:nowrap;right:1403.6px;transform-origin:100% 0;transform:scaleX(0.938);">27</div>
<div style="position:absolute;top:944.35px;font-size:16.8px;line-height:16.8px;color:#999;white-space:nowrap;right:1328.7px;transform-origin:100% 0;transform:scaleX(0.918);">(0.26%)</div>
<div style="position:absolute;top:941.98px;font-size:19.6px;line-height:19.6px;color:#111;white-space:nowrap;right:1223.8px;transform-origin:100% 0;transform:scaleX(0.938);">68</div>
<div style="position:absolute;top:944.35px;font-size:16.8px;line-height:16.8px;color:#999;white-space:nowrap;right:1148.6px;transform-origin:100% 0;transform:scaleX(0.918);">(0.43%)</div>
<div style="position:absolute;top:941.98px;font-size:19.6px;line-height:19.6px;color:#111;white-space:nowrap;right:962.9000000000001px;transform-origin:100% 0;transform:scaleX(0.938);">54.41%</div>
<div style="position:absolute;top:941.98px;font-size:19.6px;line-height:19.6px;color:#111;white-space:nowrap;right:795px;transform-origin:100% 0;transform:scaleX(0.938);">3.09</div>
<div style="position:absolute;top:941.98px;font-size:19.6px;line-height:19.6px;color:#111;white-space:nowrap;right:600.8px;transform-origin:100% 0;transform:scaleX(0.938);">00:01:55</div>
<div style="position:absolute;top:941.98px;font-size:19.6px;line-height:19.6px;color:#111;white-space:nowrap;right:385px;transform-origin:100% 0;transform:scaleX(0.938);">1.47%</div>
<div style="position:absolute;top:941.98px;font-size:19.6px;line-height:19.6px;color:#111;white-space:nowrap;right:302.29999999999995px;transform-origin:100% 0;transform:scaleX(0.938);">1</div>
<div style="position:absolute;top:944.35px;font-size:16.8px;line-height:16.8px;color:#999;white-space:nowrap;right:226.70000000000005px;transform-origin:100% 0;transform:scaleX(0.918);">(1.03%)</div>
<div style="position:absolute;top:941.98px;font-size:19.6px;line-height:19.6px;color:#111;white-space:nowrap;right:94.59999999999991px;transform-origin:100% 0;transform:scaleX(0.938);">&pound;44.98</div>
<div style="position:absolute;top:944.35px;font-size:16.8px;line-height:16.8px;color:#999;white-space:nowrap;right:19px;transform-origin:100% 0;transform:scaleX(0.918);">(0.18%)</div>
<div style="position:absolute;left:10px;top:992.5px;width:14px;height:14px;border:2px solid #6a6a6a;border-radius:3px;background:#fff"></div>
<div style="position:absolute;top:994.15px;font-size:19.4px;line-height:19.4px;color:#222;white-space:nowrap;right:2027.3px;transform-origin:100% 0;transform:scaleX(0.95);">6.</div>
<div style="position:absolute;top:994.15px;font-size:19.4px;line-height:19.4px;color:#1560a8;white-space:nowrap;left:105px;transform-origin:0 0;transform:scaleX(0.967);">Display</div>
<div style="position:absolute;top:993.98px;font-size:19.6px;line-height:19.6px;color:#111;white-space:nowrap;font-weight:700;right:1583.7px;transform-origin:100% 0;transform:scaleX(0.985);">7</div>
<div style="position:absolute;top:996.35px;font-size:16.8px;line-height:16.8px;color:#8a8a8a;white-space:nowrap;font-weight:700;right:1508.4px;transform-origin:100% 0;transform:scaleX(0.98);">(0.06%)</div>
<div style="position:absolute;top:993.98px;font-size:19.6px;line-height:19.6px;color:#111;white-space:nowrap;right:1403.6px;transform-origin:100% 0;transform:scaleX(0.938);">4</div>
<div style="position:absolute;top:996.35px;font-size:16.8px;line-height:16.8px;color:#999;white-space:nowrap;right:1328.7px;transform-origin:100% 0;transform:scaleX(0.918);">(0.04%)</div>
<div style="position:absolute;top:993.98px;font-size:19.6px;line-height:19.6px;color:#111;white-space:nowrap;right:1223.8px;transform-origin:100% 0;transform:scaleX(0.938);">12</div>
<div style="position:absolute;top:996.35px;font-size:16.8px;line-height:16.8px;color:#999;white-space:nowrap;right:1148.6px;transform-origin:100% 0;transform:scaleX(0.918);">(0.08%)</div>
<div style="position:absolute;top:993.98px;font-size:19.6px;line-height:19.6px;color:#111;white-space:nowrap;right:962.9000000000001px;transform-origin:100% 0;transform:scaleX(0.938);">66.67%</div>
<div style="position:absolute;top:993.98px;font-size:19.6px;line-height:19.6px;color:#111;white-space:nowrap;right:795px;transform-origin:100% 0;transform:scaleX(0.938);">1.75</div>
<div style="position:absolute;top:993.98px;font-size:19.6px;line-height:19.6px;color:#111;white-space:nowrap;right:600.8px;transform-origin:100% 0;transform:scaleX(0.938);">00:00:14</div>
<div style="position:absolute;top:993.98px;font-size:19.6px;line-height:19.6px;color:#111;white-space:nowrap;right:385px;transform-origin:100% 0;transform:scaleX(0.938);">0.00%</div>
<div style="position:absolute;top:993.98px;font-size:19.6px;line-height:19.6px;color:#111;white-space:nowrap;right:302.29999999999995px;transform-origin:100% 0;transform:scaleX(0.938);">0</div>
<div style="position:absolute;top:996.35px;font-size:16.8px;line-height:16.8px;color:#999;white-space:nowrap;right:226.70000000000005px;transform-origin:100% 0;transform:scaleX(0.918);">(0.00%)</div>
<div style="position:absolute;top:993.98px;font-size:19.6px;line-height:19.6px;color:#111;white-space:nowrap;right:94.59999999999991px;transform-origin:100% 0;transform:scaleX(0.938);">&pound;0.00</div>
<div style="position:absolute;top:996.35px;font-size:16.8px;line-height:16.8px;color:#999;white-space:nowrap;right:19px;transform-origin:100% 0;transform:scaleX(0.918);">(0.00%)</div>
<div style="position:absolute;top:1052.14px;font-size:17.4px;line-height:17.4px;color:#333;white-space:nowrap;left:1638.4px;transform-origin:0 0;transform:scaleX(0.9238);">Show rows:</div>
<div style="position:absolute;left:1730.7px;top:1044.5px;width:73.5px;height:31.6px;border:1.5px solid #666;border-radius:4px;background:#fff"></div>
<div style="position:absolute;top:1054.34px;font-size:17.4px;line-height:17.4px;color:#222;white-space:nowrap;left:1738.8px;transform-origin:0 0;transform:scaleX(0.95);">10</div>
<svg style="position:absolute;left:1779px;top:1054px" width="22" height="16" viewBox="0 0 22 16"><path d="M3 3.5 L10.5 11.5 L18 3.5" stroke="#111" stroke-width="3.6" fill="none"/></svg>
<div style="position:absolute;top:1052.14px;font-size:17.4px;line-height:17.4px;color:#333;white-space:nowrap;left:1815.8px;transform-origin:0 0;transform:scaleX(0.9008);">Go to:</div>
<div style="position:absolute;left:1866.3px;top:1044.5px;width:48.3px;height:32.2px;border:1.5px solid #bbb;border-top-color:#999;background:#fff"></div>
<div style="position:absolute;top:1054.34px;font-size:17.4px;line-height:17.4px;color:#222;white-space:nowrap;left:1877.3px;transform-origin:0 0;transform:scaleX(0.95);">1</div>
<div style="position:absolute;top:1052.14px;font-size:17.4px;line-height:17.4px;color:#333;white-space:nowrap;left:1926.3px;transform-origin:0 0;transform:scaleX(0.9112);">1 - 6 of 6</div>
<div style="position:absolute;left:2000.4px;top:1040.8px;width:82px;height:34px;border:1.5px solid #bdbdbd;border-radius:4px;background:linear-gradient(#fbfbfb,#eeeeee);overflow:hidden"><div style="position:absolute;left:42.3px;top:0;width:1.2px;height:36px;background:#ccc"></div></div>
<svg style="position:absolute;left:2014px;top:1050px" width="16" height="18" viewBox="0 0 16 18"><path d="M11 3 L5 9 L11 15" stroke="#333" stroke-width="3" fill="none"/></svg>
<svg style="position:absolute;left:2055px;top:1050px" width="16" height="18" viewBox="0 0 16 18"><path d="M5 3 L11 9 L5 15" stroke="#333" stroke-width="3" fill="none"/></svg>
</div></body></html>
